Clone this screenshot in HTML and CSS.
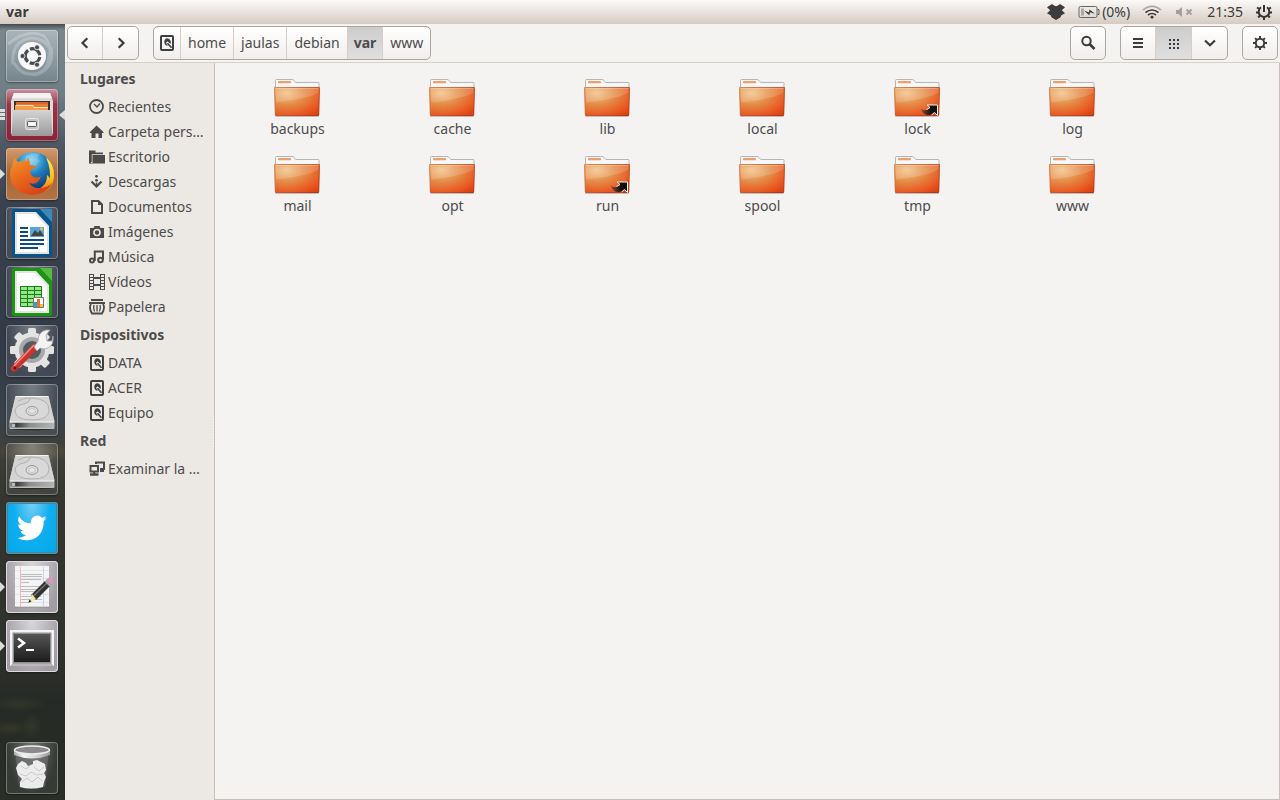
FILE: index.html
```html
<!DOCTYPE html>
<html lang="es">
<head>
<meta charset="utf-8">
<meta name="viewport" content="width=device-width, initial-scale=1">
<title>var</title>
<link rel="stylesheet" href="styles.css">
</head>
<body>
<svg class="defs" width="0" height="0" aria-hidden="true">
  <defs>
    <radialGradient id="fold" cx="0.27" cy="0.2" r="0.95"><stop offset="0" stop-color="#f2c388"/><stop offset=".45" stop-color="#e48a46"/><stop offset=".85" stop-color="#ea551f"/><stop offset="1" stop-color="#dc4614"/></radialGradient>
    <linearGradient id="foldedge" x1="0" y1="0" x2="1" y2="1"><stop offset="0" stop-color="#d98a52"/><stop offset="1" stop-color="#a82c0c"/></linearGradient>
    <linearGradient id="metal" x1="0" y1="0" x2="0" y2="1"><stop offset="0" stop-color="#d4d4d4"/><stop offset="1" stop-color="#9a9a9a"/></linearGradient>
    <linearGradient id="metal2" x1="0" y1="0" x2="1" y2="0"><stop offset="0" stop-color="#a8a8a8"/><stop offset=".25" stop-color="#f4f4f4"/><stop offset=".6" stop-color="#d8d8d8"/><stop offset="1" stop-color="#999"/></linearGradient>
    <linearGradient id="drivefront" x1="0" y1="0" x2="1" y2="0"><stop offset="0" stop-color="#8c8c8c"/><stop offset=".15" stop-color="#3b3b3b"/><stop offset=".45" stop-color="#8e8e8e"/><stop offset="1" stop-color="#b5b5b5"/></linearGradient>
    <linearGradient id="red" x1="0" y1="0" x2="1" y2="1"><stop offset="0" stop-color="#f0584c"/><stop offset="1" stop-color="#a31414"/></linearGradient>
    <radialGradient id="globe" cx=".45" cy=".2" r=".8"><stop offset="0" stop-color="#8fdcf5"/><stop offset=".45" stop-color="#1f80c0"/><stop offset="1" stop-color="#0b2f63"/></radialGradient>
    <linearGradient id="fox" x1="0" y1="0" x2=".6" y2="1"><stop offset="0" stop-color="#f39a2c"/><stop offset=".5" stop-color="#ea6a1c"/><stop offset="1" stop-color="#d8431a"/></linearGradient>
    <linearGradient id="flame" x1="0" y1="0" x2="0" y2="1"><stop offset="0" stop-color="#fff04a"/><stop offset=".6" stop-color="#fbb924"/><stop offset="1" stop-color="#e85f1b"/></linearGradient>
    <linearGradient id="screen" x1="0" y1="0" x2="0" y2="1"><stop offset="0" stop-color="#555"/><stop offset="1" stop-color="#1c1c1c"/></linearGradient>
    <linearGradient id="arrow" x1="0" y1="0" x2="1" y2="0"><stop offset="0" stop-color="#8a4a38"/><stop offset=".6" stop-color="#111"/></linearGradient>
    <symbol id="folder" viewBox="1 0 48 40">
      <rect x="2" y="37" width="44" height="2" rx="1" fill="#000" opacity=".18"/>
      <path d="M2.500 12V2.500q0-1 1-1H19q1 0 1.600.7L23 4.500h22.500q.5 0 .5.7V12z" fill="#f7f7f7" stroke="#b5b5b5"/>
      <rect x="5" y="3" width="13" height="2.200" rx=".6" fill="#ef9e6e"/>
      <path d="M1.500 9.500h45l-.8 27.500q0 .6-.6.600H3q-.6 0-.6-.600z" fill="url(#fold)" stroke="url(#foldedge)"/>
      <path d="M2.500 10.500h43l-.2 4q-9 6-42 10z" fill="#fff" opacity=".16"/>
      <path d="M2.500 10.500h43" stroke="#fff" opacity=".3"/>
    </symbol>
    <symbol id="link" viewBox="0 0 20 12">
      <path d="M2 4.500q2 2.500 5 1.500 2-.8 4-2.500L8.500 1H18.500v10L16 8.500q-3.500 2.500-7 2.500-5.500 0-7-6.500z" fill="url(#arrow)"/>
      <path d="M8 1H18.500V11.500L15.500 8.500l-3 2.500M7.500 5.500q2-.8 3.500-2L8 1" fill="none" stroke="#fbeee8"/>
    </symbol>
    <symbol id="disk" viewBox="0 0 16 16">
      <rect x="2" y="1" width="12" height="14" rx="1" fill="none" stroke="#3f3f3f" stroke-width="2"/>
      <path d="M8 3.200a3.900 3.900 0 0 1 3.400 5.800l-1-1L8.600 6.200 7 7.800l1.800 3A3.900 3.900 0 0 1 8 3.200z" fill="#3f3f3f"/>
      <path d="M8.500 8.300l4 4.500" stroke="#3f3f3f" stroke-width="1.600"/>
    </symbol>
    <symbol id="drive" viewBox="0 0 52 52">
      <ellipse cx="26" cy="44" rx="22" ry="2.500" fill="#000" opacity=".4"/>
      <path d="M9.500 12h33L48.500 37v7q0 1-1 1h-43q-1 0-1-1v-7z" fill="#bbb"/>
      <path d="M9.500 12h33L48.500 38h-45z" fill="#d3d3d3"/>
      <path d="M10 12.500h32" stroke="#f5f5f5"/>
      <path d="M12 17q7-4 14-3 17 1 17 12 0 10-17 10-16 0-17-9 1-6 9-7 5-1 7-6" fill="#d9d9d9" stroke="#b2b2b2"/>
      <ellipse cx="26" cy="27" rx="6" ry="4.500" fill="#dedede" stroke="#999"/><ellipse cx="26" cy="27" rx="3.500" ry="2.500" fill="#e6e6e6" stroke="#c2c2c2"/>
      <path d="M4 38.500h44v5H4z" fill="url(#drivefront)"/><path d="M4 38h44" stroke="#f7f7f7"/>
      <path d="M6 40h3v3H6z" fill="#bbb"/>
    </symbol>
  </defs>
</svg>

<header class="panel">
  <h1 class="panel-title">var</h1>
  <div class="tray">
    <svg width="20" height="18" viewBox="0 0 20 18" fill="#3c3c3c"><path d="M6 1l4 2.700L14 1l5 3.200-3.200 3 3.200 3-4.300 2.600L10 9.700l-4.700 3.100L1 10.200l3.200-3L1 4.200zM5.500 13.500L10 10.700l4.500 2.800v.8L10 17l-4.500-2.700z"/><path d="M5 4.500l5-1.500 5 1.500v9l-5 3-5-3z"/></svg>
    <span class="battery"><svg width="22" height="14" viewBox="0 0 22 14"><rect x="1" y="1.500" width="18" height="11" rx="1.500" fill="none" stroke="#666"/><path d="M19.500 4.500h1.500v5h-1.500" fill="none" stroke="#555"/><path d="M3 3.500h3v7H3z" fill="#aaa"/><path d="M6 5.500l5 2 .5-3L17 8.800l-5-1.500-.8 3z" fill="#333"/></svg>(0%)</span>
    <svg class="wifi" width="20" height="14" viewBox="0 0 20 14" fill="none" stroke-width="1.600"><path d="M.8 5Q10-2.500 19.200 5" stroke="#aaa59f"/><path d="M3.500 7.500q6.500-5 13 0M6 10q4-3 8 0" stroke="#3c3c3c"/><path d="M8 12l2-1.500 2 1.500-2 2z" fill="#3c3c3c"/></svg>
    <svg class="sound" width="18" height="12" viewBox="0 0 18 12"><path d="M1 4h2.500L7 1v10L3.500 8H1z" fill="#a39f9a"/><path d="M11.500 3.500l5 5m0-5l-5 5" stroke="#a39f9a" stroke-width="2"/></svg>
    <time>21:35</time>
    <svg class="power" width="18" height="18" viewBox="0 0 18 18" fill="none" stroke="#333"><path d="M6 4.300a5.300 5.300 0 1 0 6 0" stroke-width="2"/><path d="M9 2v7" stroke-width="2"/><path d="M4.500 6L2 4.500M13.500 6L16 4.500M3.500 9.500H1M14.500 9.500H17M5 12.500l-1.800 2M13 12.500l1.800 2M9 14v3" stroke-width="2"/></svg>
  </div>
</header>

<div class="desktop">
<nav class="launcher" aria-label="Lanzador">
  <button class="tile dash" aria-label="Inicio"><svg viewBox="0 0 52 52"><g fill="none" stroke="#fff" opacity=".22" stroke-width="3"><path d="M7 34Q5 12 24 8q18 0 22 17M45 17q4 20-13 27-16 3-24-11M2 14Q22-2 38 6q10 12 4 24M17 43q22 5 26-14"/></g><circle cx="26" cy="26" r="14" fill="#f8f8f8"/><circle cx="26.500" cy="26" r="7.300" fill="none" stroke="#454c52" stroke-width="3.200" stroke-dasharray="13.200 2.090" stroke-dashoffset="-1"/><g fill="#454c52" stroke="#f8f8f8" stroke-width=".8"><circle cx="16.500" cy="26" r="2.500"/><circle cx="31" cy="17.300" r="2.500"/><circle cx="31" cy="34.700" r="2.500"/></g></svg></button>
  <button class="tile files running" aria-label="Archivos"><span class="pips"></span><span class="focus"></span><svg viewBox="0 0 52 52"><path d="M8 4h36l3 8v33H5V12z" fill="#dddbda"/><path d="M8 4h36l2 5H6z" fill="#f4f3f2"/><path d="M8 12h36v10H8z" fill="#3a302c"/><path d="M10 13h32v8H10z" fill="#e77b2f"/><path d="M10 14h32" stroke="#d96428" stroke-width="2"/><path d="M9 16h18l1 2h14v4H9z" fill="#f49a4a"/><path d="M10 16.500h17l1 2h14" fill="none" stroke="#fde0bd"/><path d="M7 21h38l1.500 26h-41z" fill="url(#metal)"/><rect x="19.500" y="29.500" width="13" height="11" rx="2" fill="#c4c4c4" stroke="#e6e6e6"/><rect x="21.500" y="32.500" width="9" height="5" rx="1" fill="#f7f7f7" stroke="#555"/></svg></button>
  <button class="tile firefox running" aria-label="Firefox"><span class="pip"></span><svg viewBox="0 0 52 52"><circle cx="27" cy="24" r="20" fill="url(#globe)"/><path d="M20 8q7-4 14-2-5 4 0 7l-6 6q-5 0-8-3z" fill="#9bd6ee" opacity=".4"/><path d="M40 9q8 7 8 18 0 14-14 19l-10-4q17 0 17-15 3 2 2 5 3-8-3-23z" fill="url(#flame)"/><path d="M9 10q1 3 4 4 4-2 8-1l1-4q2 4 2 8 5 0 6 2-5 2-6 5l2 4q5 3 9 0-3 10-12 7 4 6 11 5 7 0 12-5-5 11-20 12Q5 45 4 27q0-6 2-10-1 2 0 4Q6 14 9 10z" fill="url(#fox)"/></svg></button>
  <button class="tile" aria-label="Writer"><svg viewBox="0 0 52 52"><path d="M8 2h26l12 13v33q0 2-2 2H8q-2 0-2-2V4q0-2 2-2z" fill="#07538a"/><path d="M34 2h12v13z" fill="#3a89bd"/><path d="M9 5h21l13 14v28H9z" fill="#e4e4e4"/><path d="M11 7h18l12 13v25H11z" fill="#fff"/><path d="M14 21h8M14 25h8M14 29h8M14 33h24M14 37h24M14 41h18" stroke="#0c4d7d" stroke-width="2"/><path d="M24 20h14v10H24z" fill="#5aa5d8"/><path d="M25 29l4-6 3 3 2-3 4 6z" fill="#444"/><circle cx="35.500" cy="22" r="1.500" fill="#f3c33c"/></svg></button>
  <button class="tile" aria-label="Calc"><svg viewBox="0 0 52 52"><path d="M8 2h26l12 13v33q0 2-2 2H8q-2 0-2-2V4q0-2 2-2z" fill="#1c9510"/><path d="M34 2h12v13z" fill="#53ba42"/><path d="M9 5h21l13 14v28H9z" fill="#e4e4e4"/><path d="M11 7h18l12 13v25H11z" fill="#fff"/><path d="M14 20h22v21H14z" fill="#96e58a"/><path d="M14.500 20.500h21v20h-21zM14 24.500h22M14 28.500h22M14 32.500h22M14 36.500h22M21.500 20v21M28.500 20v21" fill="none" stroke="#177f10"/><path d="M27.500 31.500h10v10h-10z" fill="#fff" stroke="#777"/><path d="M28 36h3v5h-3z" fill="#2f9ede"/><path d="M31 33h3v8h-3z" fill="#e96d2f"/><path d="M34 38h3v3h-3z" fill="#f3c12b"/></svg></button>
  <button class="tile" aria-label="Configuración"><svg viewBox="0 0 52 52"><g transform="translate(26 25)" fill="#e3e3e3"><circle r="17.500"/><g id="teeth"><rect x="-4" y="-22" width="8" height="44" rx="1.500"/><rect x="-22" y="-4" width="44" height="8" rx="1.500"/></g><use href="#teeth" transform="rotate(45)"/><circle r="13" fill="#a8a8a8"/><circle r="9" fill="#525a63"/></g><path d="M6 41L28 18l5 5-23 23q-3 2-5-1-1-2 1-4z" fill="url(#red)"/><path d="M8 41L28 20" stroke="#f58b7f" stroke-width="1.500"/><path d="M28 22l4-6q0-9 8-11l4 0-4 5 1 6 5 0 1-5q1 9-5 12-4 2-8 0l-3 3z" fill="#f3f3f3" stroke="#a6a6a6" stroke-width=".8"/><circle cx="9" cy="43" r="1.500" fill="#6d1010"/></svg></button>
  <button class="tile" aria-label="DATA"><svg><use href="#drive"/></svg></button>
  <button class="tile" aria-label="ACER"><svg><use href="#drive"/></svg></button>
  <button class="tile twitter" aria-label="Twitter"><svg viewBox="0 0 52 52"><path d="M40.500 16q-1.500 1-3 1.200 2-1.500 2.500-3-2 1-4 1.500-2-2.200-5-2.200-6 .6-6.500 8Q18 21.500 13 14.500q-2.500 5 2 8.500-1.500 0-2.800-.8.3 5 5 6.500-1.500.5-2.700.2 1.500 3.700 5.700 4.200-4 3-8.700 2.800 6 3.200 12 2.100Q37.500 35.500 37.700 19q1.700-1.300 2.800-3z" fill="#fff"/></svg></button>
  <button class="tile light running" aria-label="Editor de textos"><span class="pip"></span><svg viewBox="0 0 52 52"><path d="M9 5h34v41H9z" fill="#f4f4f4"/><path d="M9 46h34" stroke="#777" opacity=".5"/><path d="M9 9.500h34M9 17.500h34M9 25.500h34M9 33.500h34M9 41.500h34" stroke="#dde6ee"/><path d="M14.500 6v40" stroke="#f4b8b8"/><path d="M37.500 6v40" stroke="#c5d4f0"/><path d="M15 13.500h21M15 15.500h21M15 18.500h20M15 21.500h8M15 25.500h21M15 28.500h18M15 30.500h21M15 35.500h20M15 38.500h21M15 41.500h9" stroke="#bcbcbc"/><path d="M25 34L39 20l5 5-14 14z" fill="#333"/><path d="M27.500 35l14-13.500" stroke="#777" stroke-width="1.200"/><path d="M38.500 20.500l3-3 5 5-3 3z" fill="#aaa"/><path d="M41.500 17.500q2-2 4 0 3 2 1 4l-1 1-5-4z" fill="#e88fc4"/><path d="M26 33l4 5-6 3z" fill="#f1e5a0"/><path d="M23.500 38.500l2 2-3 1z" fill="#222"/></svg></button>
  <button class="tile light running" aria-label="Terminal"><span class="pip"></span><svg viewBox="0 0 52 52"><path d="M4 10h44v36H4z" fill="#f4f4f4"/><path d="M4 46h44l-3-3H7z" fill="#b8b8b8"/><path d="M6.500 12.500h39v31h-39z" fill="#8f8f8f"/><path d="M8 14h36v28H8z" fill="url(#screen)"/><path d="M12 18.500l6 4.500-6 4.500" fill="none" stroke="#fff" stroke-width="2.500"/><path d="M20 30h8" stroke="#fff" stroke-width="2"/></svg></button>
  <button class="tile trash" aria-label="Papelera"><svg viewBox="0 0 52 52"><path d="M9.500 13l3.500 32q13 4 26 0l3.500-32z" fill="#ccc" opacity=".2"/><path d="M12 22l4-3 4 2 2 3 5-2 0-3 4-1 4 2 4 2 1 6-2 3 2 4-2 5-1 5q-12 3-23 0l0-5 2-3-4-4-2-7z" fill="#ececec"/><path d="M15 24l5 3 5-4M28 25l5 4 5-4M14 32l6 2 5-4 6 3 6-1M16 40l5-4 5 4 6-5 4 4" fill="none" stroke="#c9c9c9"/><path d="M8 8v5q18 7 36 0V8z" fill="url(#metal2)"/><ellipse cx="26" cy="8" rx="17.500" ry="4" fill="#8a8a8a" stroke="#eee" stroke-width="1.500"/></svg></button>
</nav>

<main class="window">
  <div class="toolbar">
    <div class="group">
      <button aria-label="Atrás"><svg width="16" height="16" viewBox="0 0 16 16"><path d="M10.300 3.200L5.500 8l4.800 4.800" fill="none" stroke="#3c3c3c" stroke-width="2.200"/></svg></button>
      <button aria-label="Adelante"><svg width="16" height="16" viewBox="0 0 16 16"><path d="M5.700 3.200L10.500 8l-4.800 4.800" fill="none" stroke="#3c3c3c" stroke-width="2.200"/></svg></button>
    </div>
    <div class="group path">
      <button class="root" aria-label="Equipo"><svg width="16" height="16"><use href="#disk"/></svg></button>
      <button>home</button>
      <button>jaulas</button>
      <button>debian</button>
      <button class="active">var</button>
      <button>www</button>
    </div>
    <div class="actions">
      <div class="group"><button aria-label="Buscar"><svg width="16" height="16" viewBox="0 0 16 16"><circle cx="6.500" cy="6" r="4.200" fill="none" stroke="#3c3c3c" stroke-width="2"/><path d="M9.500 9l5 5" stroke="#3c3c3c" stroke-width="2.600"/></svg></button></div>
      <div class="group">
        <button aria-label="Vista de lista"><svg width="16" height="16" viewBox="0 0 16 16"><path d="M3 4h10M3 8h10M3 12h10" stroke="#3c3c3c" stroke-width="2"/></svg></button>
        <button class="active" aria-label="Vista de iconos"><svg width="16" height="16" viewBox="0 0 16 16"><path d="M3 5h10M3 9h10M3 13h10" stroke="#3c3c3c" stroke-width="2" stroke-dasharray="2 2"/></svg></button>
        <button aria-label="Opciones de vista"><svg width="16" height="16" viewBox="0 0 16 16"><path d="M3 5.500l5 4.800 5-4.800" fill="none" stroke="#3c3c3c" stroke-width="2.200"/></svg></button>
      </div>
      <div class="group"><button aria-label="Preferencias"><svg width="16" height="16" viewBox="0 0 16 16"><circle cx="8" cy="8" r="4.200" fill="none" stroke="#3c3c3c" stroke-width="2"/><path d="M8 1v3M8 12v3M1 8h3M12 8h3M3.100 3.100l2 2M10.900 10.900l2 2M3.100 12.900l2-2M10.900 5.100l2-2" stroke="#3c3c3c" stroke-width="2"/></svg></button></div>
    </div>
  </div>

  <div class="content">
    <aside class="sidebar">
      <h2>Lugares</h2>
      <ul>
        <li><a href="#"><svg viewBox="0 0 16 16"><circle cx="7.500" cy="7.500" r="6.500" fill="none" stroke="#4a4a4a" stroke-width="1.800"/><path d="M5 5l3 3 3-3.500" fill="none" stroke="#4a4a4a" stroke-width="1.300"/></svg>Recientes</a></li>
        <li><a href="#"><svg viewBox="0 0 16 16"><path d="M7.500 1.500L14.500 8v1H13v5H9.500V9.500h-3V14H2.500V9H1V8z" fill="#4a4a4a"/></svg>Carpeta pers…</a></li>
        <li><a href="#"><svg viewBox="0 0 16 16"><path d="M0 1.500h6.500v2H14v1.800H2.800V13H2v1.500H0z" fill="#4a4a4a"/><path d="M3.500 6H16v8.500H1V14h2.500z" fill="#4a4a4a"/></svg>Escritorio</a></li>
        <li><a href="#"><svg viewBox="0 0 16 16"><path d="M2.500 7.500l5 5 5-5" fill="none" stroke="#4a4a4a" stroke-width="2.200"/><circle cx="7.500" cy="2.300" r="1.400" fill="#4a4a4a"/><circle cx="7.500" cy="6.300" r="1.400" fill="#4a4a4a"/><path d="M7.500 8.500v3" stroke="#4a4a4a" stroke-width="1.500"/></svg>Descargas</a></li>
        <li><a href="#"><svg viewBox="0 0 16 16"><path d="M3 2h6.500L13 5.500V14H3z" fill="none" stroke="#4a4a4a" stroke-width="2"/><path d="M9 2v4h4" fill="#4a4a4a"/></svg>Documentos</a></li>
        <li><a href="#"><svg viewBox="0 0 16 16"><path d="M1 4h3.500l1-2h5l1 2H15v10H1z" fill="#4a4a4a"/><circle cx="8" cy="8.500" r="3" fill="none" stroke="#ece9e4" stroke-width="1.600"/></svg>Imágenes</a></li>
        <li><a href="#"><svg viewBox="0 0 16 16" fill="none" stroke="#4a4a4a" stroke-width="2"><circle cx="3" cy="11.500" r="2"/><circle cx="11.500" cy="11" r="2.300"/><path d="M5.800 12V2.500H14V11"/></svg>Música</a></li>
        <li><a href="#"><svg viewBox="0 0 16 16"><path d="M.5 0v16M4.500 0v16M11.500 0v16M15.500 0v16" stroke="#4a4a4a" stroke-width="1"/><path d="M2.500 0v16M13.500 0v16" stroke="#4a4a4a" stroke-width="3" stroke-dasharray="1 2"/><path d="M5 4h6M5 11h6" stroke="#4a4a4a" stroke-width="2"/></svg>Vídeos</a></li>
        <li><a href="#"><svg viewBox="0 0 16 16" fill="none" stroke="#4a4a4a"><path d="M2 1h12M0 4h16" stroke-width="2"/><path d="M2 5Q-.5 9 3 14.500h10q3.500-5.500 1-9.500" stroke-width="1.800"/><path d="M5 6q-1 3.500.5 6.500M11 6q1 3.500-.5 6.500M8 6v6.500" stroke-width="1.300"/></svg>Papelera</a></li>
      </ul>
      <h2>Dispositivos</h2>
      <ul>
        <li><a href="#"><svg><use href="#disk"/></svg>DATA</a></li>
        <li><a href="#"><svg><use href="#disk"/></svg>ACER</a></li>
        <li><a href="#"><svg><use href="#disk"/></svg>Equipo</a></li>
      </ul>
      <h2>Red</h2>
      <ul>
        <li><a href="#"><svg viewBox="0 0 16 16" fill="none" stroke="#4a4a4a" stroke-width="2"><path d="M7 3V1.500h8v6.500h-4"/><path d="M11 10h4" /><path d="M1.500 5h7.500v5.500H1.500z"/><path d="M1 13.500h8.500" stroke-width="2.500"/><path d="M5.200 10v3"/></svg>Examinar la …</a></li>
      </ul>
    </aside>
    <section class="files-view" aria-label="Archivos">
      <a class="item" href="#"><span class="pic"><svg><use href="#folder"/></svg></span>backups</a>
      <a class="item" href="#"><span class="pic"><svg><use href="#folder"/></svg></span>cache</a>
      <a class="item" href="#"><span class="pic"><svg><use href="#folder"/></svg></span>lib</a>
      <a class="item" href="#"><span class="pic"><svg><use href="#folder"/></svg></span>local</a>
      <a class="item" href="#"><span class="pic"><svg><use href="#folder"/></svg><svg class="emblem"><use href="#link"/></svg></span>lock</a>
      <a class="item" href="#"><span class="pic"><svg><use href="#folder"/></svg></span>log</a>
      <a class="item" href="#"><span class="pic"><svg><use href="#folder"/></svg></span>mail</a>
      <a class="item" href="#"><span class="pic"><svg><use href="#folder"/></svg></span>opt</a>
      <a class="item" href="#"><span class="pic"><svg><use href="#folder"/></svg><svg class="emblem"><use href="#link"/></svg></span>run</a>
      <a class="item" href="#"><span class="pic"><svg><use href="#folder"/></svg></span>spool</a>
      <a class="item" href="#"><span class="pic"><svg><use href="#folder"/></svg></span>tmp</a>
      <a class="item" href="#"><span class="pic"><svg><use href="#folder"/></svg></span>www</a>
    </section>
  </div>
</main>
</div>
</body>
</html>
```
FILE: styles.css
```css
* { box-sizing: border-box; }
body {
  margin: 0;
  min-height: 100vh;
  display: flex;
  flex-direction: column;
  font: 14px/20px "Noto Sans", "Open Sans", sans-serif;
  color: #4c4c4c;
  background: #f5f3f2;
}
button { font: inherit; color: inherit; border: 0; padding: 0; margin: 0; background: none; }
a { color: inherit; text-decoration: none; }
svg { display: block; }
.defs { position: absolute; }

.panel {
  height: 24px;
  display: flex;
  align-items: center;
  justify-content: space-between;
  padding: 0 7px 0 6px;
  color: #3c3c3c;
  background: linear-gradient(#fbfaf9, #ece7e2 40%, #d6cbc2);
}
.panel-title { margin: 0; font-size: 14px; font-weight: 700; }
.tray { display: flex; align-items: center; }
.battery { display: flex; align-items: center; gap: 2px; margin-left: 12px; }
.wifi { margin-left: 12px; }
.sound { margin-left: 13px; }
.tray time { margin-left: 14px; }
.power { margin-left: 12px; }

.desktop { flex: 1; display: flex; }

.launcher {
  flex: none;
  width: 65px;
  padding: 6px;
  display: flex;
  flex-direction: column;
  gap: 7px;
  background:
    linear-gradient(#2229, transparent 6px),
    radial-gradient(ellipse 30px 8px at 18px 680px, #4a4d3055, transparent),
    radial-gradient(ellipse 10px 14px at 32px 702px, #5b663a33, transparent),
    radial-gradient(ellipse 22px 7px at 10px 704px, #5c5a3044, transparent),
    radial-gradient(ellipse 60px 10px at 40px 428px, #6c5f3d66, transparent),
    linear-gradient(#7a878c 0, #6f7d85 70px, #4c5560 125px, #3a424f 180px, #333a47 330px, #39424b 390px, #3e3f3a 425px, #33352f 480px, #30322d 620px, #262a26 680px, #292e27 100%);
}
.tile {
  position: relative;
  width: 52px;
  height: 52px;
  flex: none;
  border-radius: 4px;
  background: radial-gradient(ellipse at 50% 0, #fff5, #fff1 70%);
  box-shadow: inset 0 0 0 1px #ffffff4d, 0 1px 2px #0006;
}
.tile > svg { width: 52px; height: 52px; }
.dash { background: linear-gradient(#aab5bb, #75848c); }
.files { background: linear-gradient(#c795a0, #9b3347 30%, #8c2438); }
.firefox { background: linear-gradient(#d49a6c, #a6673a 50%, #b27446); }
.light { background: radial-gradient(ellipse at 50% 0, #d9d7da, #a19da3 80%); box-shadow: inset 0 0 0 1px #dedbe0, 0 1px 2px #0006; }
.twitter { background: radial-gradient(ellipse at 50% 0, #77d0f5, #10aeee 50%, #00a8ec); box-shadow: inset 0 0 0 1px #7c8788, inset 0 0 0 2px #2a8fb8, 0 1px 2px #0006; }
.trash { margin-top: auto; }
.pip, .focus { position: absolute; top: 21px; width: 5px; height: 10px; background: #ddd; }
.pip { left: -6px; clip-path: polygon(0 0, 100% 50%, 0 100%); }
.focus { right: -7px; width: 6px; clip-path: polygon(100% 0, 0 50%, 100% 100%); }
.pips { position: absolute; left: -6px; top: 20px; width: 5px; height: 11px; background: repeating-linear-gradient(#ddd 0 3px, transparent 3px 4px); }

.window { flex: 1; min-width: 0; display: flex; flex-direction: column; }
.toolbar {
  display: flex;
  gap: 14px;
  padding: 2px 2px;
  border-bottom: 1px solid #d9d0c8;
  background: #f5f3f2;
}
.group {
  display: flex;
  height: 34px;
  border: 1px solid #aaa6a2;
  border-radius: 5px;
  background: linear-gradient(#fff, #f1eeec);
  overflow: hidden;
}
.group button {
  display: flex;
  align-items: center;
  justify-content: center;
  min-width: 34px;
}
.group button + button { border-left: 1px solid #d8cec6; min-width: 36px; }
.group .active { background: linear-gradient(#cdcdcd, #dfdfdf); }
.group.path button { min-width: 0; padding: 0 7px; }
.group.path .root { padding: 0 5px; }
.group.path .active { padding: 0 6px; font-weight: 700; }
.actions { display: flex; gap: 14px; margin-left: auto; }

.content { flex: 1; display: flex; }
.sidebar { position: relative; flex: none; width: 150px; background: #ece9e4; border-right: 1px solid #c9bfb6; }
.sidebar::after {
  content: "";
  position: absolute;
  right: 0;
  top: 353px;
  width: 1px;
  height: 31px;
  background: repeating-linear-gradient(#fff 0 1px, transparent 1px 3px);
}
.sidebar h2 { margin: 0; padding-left: 15px; font-size: 14px; line-height: 31px; font-weight: 700; }
.sidebar ul { list-style: none; margin: 0; padding: 0; }
.sidebar a { display: flex; align-items: center; gap: 3px; height: 25px; padding-left: 24px; white-space: nowrap; }
.sidebar a svg { flex: none; width: 16px; height: 16px; }

.files-view {
  flex: 1;
  display: grid;
  grid-template-columns: repeat(auto-fill, 155px);
  align-content: start;
  row-gap: 16px;
  padding: 15px 5px;
  border-right: 1px solid #c9bfb6;
  border-bottom: 1px solid #c9bfb6;
}
.item { display: flex; flex-direction: column; align-items: center; gap: 1px; }
.pic { position: relative; width: 48px; height: 40px; }
.pic svg { width: 48px; height: 40px; }
.pic .emblem { position: absolute; right: 3px; bottom: 2px; width: 20px; height: 12px; }
```
